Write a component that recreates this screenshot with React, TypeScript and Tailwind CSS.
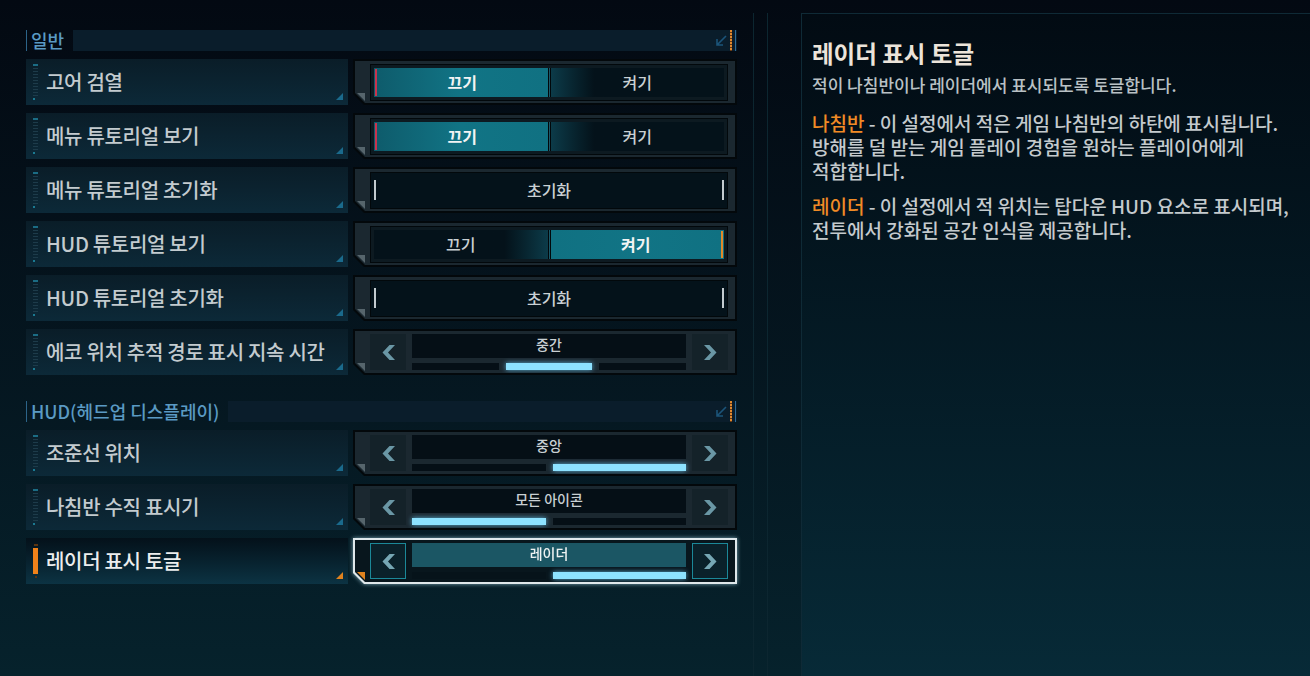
import React from "react";

type Ctrl =
  | { kind: "toggle"; on: boolean }
  | { kind: "button"; label: string }
  | { kind: "slider"; value: string; count: number; index: number };

interface Row {
  label: string;
  ctrl: Ctrl;
  selected?: boolean;
}

const GENERAL: Row[] = [
  { label: "고어 검열", ctrl: { kind: "toggle", on: false } },
  { label: "메뉴 튜토리얼 보기", ctrl: { kind: "toggle", on: false } },
  { label: "메뉴 튜토리얼 초기화", ctrl: { kind: "button", label: "초기화" } },
  { label: "HUD 튜토리얼 보기", ctrl: { kind: "toggle", on: true } },
  { label: "HUD 튜토리얼 초기화", ctrl: { kind: "button", label: "초기화" } },
  { label: "에코 위치 추적 경로 표시 지속 시간", ctrl: { kind: "slider", value: "중간", count: 3, index: 1 } },
];

const HUD: Row[] = [
  { label: "조준선 위치", ctrl: { kind: "slider", value: "중앙", count: 2, index: 1 } },
  { label: "나침반 수직 표시기", ctrl: { kind: "slider", value: "모든 아이콘", count: 2, index: 0 } },
  { label: "레이더 표시 토글", ctrl: { kind: "slider", value: "레이더", count: 2, index: 1 }, selected: true },
];

function SectionHeader({ title }: { title: string }) {
  return (
    <div className="flex h-[21px] items-stretch">
      <div className="w-px bg-[#2c6489]" />
      <div className="pl-[4px] pr-[9px] text-[18px] font-medium leading-[21px] text-[#5a9ac3]">{title}</div>
      <div className="flex flex-1 items-center justify-end bg-[#0a1d2b]">
        <svg width="12" height="12" viewBox="0 0 12 12" className="mr-[3px]">
          <path d="M11 1 L2.5 9.5 M2 4 V10 H8" stroke="#1b5479" strokeWidth="1.6" fill="none" />
        </svg>
        <div className="h-full w-[2px] bg-[repeating-linear-gradient(to_bottom,#e08a30_0_2px,#6a3a14_2px_3px)]" />
        <div className="ml-[3px] mr-[1px] h-full w-px bg-[#2a6a98]" />
      </div>
    </div>
  );
}

function Label({ text, selected }: { text: string; selected?: boolean }) {
  return (
    <div
      className={`relative flex w-[322px] shrink-0 items-center pl-[7px] ${
        selected ? "bg-linear-to-b from-[#04111a] to-[#0c3343]" : "bg-linear-to-b from-[#0a1d28] to-[#0c2938]"
      }`}
    >
      {selected ? (
        <div className="flex h-[34px] w-[5px] flex-col items-center">
          <div className="h-[2px] w-[4px] bg-[#5a3412]" />
          <div className="mt-[2px] w-[5px] flex-1 bg-[#f0821a]" />
          <div className="mt-[2px] h-[2px] w-[2px] bg-[#5a3412]" />
        </div>
      ) : (
        <div className="flex h-[36px] w-[5px] flex-col">
          <div className="h-[2px] w-[5px] bg-[#1b6c84]" />
          <div className="mt-[2px] flex-1 bg-[repeating-linear-gradient(to_bottom,#1d3b4a_0_1px,transparent_1px_3px)]" />
          <div className="mt-[1px] h-[2px] w-[2px] bg-[#1b7a92]" />
        </div>
      )}
      <span
        className={`ml-[8px] whitespace-nowrap text-[20px] font-medium leading-[26px] tracking-[-0.3px] ${
          selected ? "text-[#eceeee]" : "text-[#c3cbcf]"
        }`}
      >
        {text}
      </span>
      <div
        className={`absolute bottom-[5px] right-[5px] h-[7px] w-[7px] [clip-path:polygon(100%_0,100%_100%,0_100%)] ${
          selected ? "bg-[#e0821e]" : "bg-[#1a6a8c]"
        }`}
      />
    </div>
  );
}

function Chevron({ dir, selected }: { dir: "left" | "right"; selected?: boolean }) {
  const d = dir === "left" ? "M13 0 L6 7.5 L13 15 H7.5 L0.5 7.5 L7.5 0 Z" : "M0 0 L7 7.5 L0 15 H5.5 L12.5 7.5 L5.5 0 Z";
  return (
    <svg width="13" height="15" viewBox="0 0 13 15">
      <path d={d} fill={selected ? "#76a7b4" : "#6a97a5"} />
    </svg>
  );
}

function ArrowBox({ dir, selected }: { dir: "left" | "right"; selected?: boolean }) {
  return (
    <div
      className={`flex w-[36px] items-center justify-center ${
        selected ? "border border-[#1b8898] bg-[#0a212a]" : "bg-[#142229]"
      }`}
    >
      <Chevron dir={dir} selected={selected} />
    </div>
  );
}

function Toggle({ on }: { on: boolean }) {
  return (
    <div className="flex h-[37px] flex-1 border border-[#02080b] bg-[#0d1a21] p-[3px]">
      <div
        className={`flex flex-1 items-stretch ${
          !on ? "bg-linear-to-r from-[#0e5b6b] via-[#117485] to-[#107182]" : "bg-linear-to-r from-[#04121a] from-75% to-[#0c3b49]"
        }`}
      >
        {!on && <div className="my-[1px] ml-[1px] w-[2px] bg-[#c8354f]" />}
        <div
          className={`flex flex-1 items-center justify-center text-[16px] ${
            !on ? "font-bold text-[#f2f4f4]" : "font-medium text-[#c9d0d3]"
          }`}
        >
          끄기
        </div>
      </div>
      <div className="flex w-[3px] justify-center bg-[#01070a]">
        <div className="w-px bg-[#1a5868]" />
      </div>
      <div
        className={`flex flex-1 items-stretch ${
          on ? "bg-linear-to-r from-[#107182] via-[#117485] to-[#107182]" : "bg-linear-to-l from-[#04121a] from-75% to-[#0c3b49]"
        }`}
      >
        <div
          className={`flex flex-1 items-center justify-center text-[16px] ${
            on ? "font-bold text-[#f2f4f4]" : "font-medium text-[#c9d0d3]"
          }`}
        >
          켜기
        </div>
        {on && <div className="my-[1px] mr-[1px] w-[2px] bg-[#e08a2a]" />}
      </div>
    </div>
  );
}

function ResetButton({ label }: { label: string }) {
  return (
    <div className="flex h-[37px] flex-1 items-center border border-[#02080b] bg-[#04121a] px-[3px]">
      <div className="h-[20px] w-[2px] bg-[#c3cbcf]" />
      <div className="flex-1 text-center text-[16px] font-medium text-[#c9d0d3]">{label}</div>
      <div className="h-[20px] w-[2px] bg-[#c3cbcf]" />
    </div>
  );
}

function Slider({ value, count, index, selected }: { value: string; count: number; index: number; selected?: boolean }) {
  return (
    <div className="flex h-[36px] flex-1 gap-[6px]">
      <ArrowBox dir="left" selected={selected} />
      <div className="flex flex-1 flex-col">
        <div
          className={`h-[24px] text-center text-[14px] font-medium leading-[20px] ${
            selected ? "bg-[#1b5664] font-bold text-[#eef2f2]" : "bg-[#050f16] text-[#c9d0d3]"
          }`}
        >
          {value}
        </div>
        <div className="mt-[5px] flex h-[7px] gap-[7px]">
          {Array.from({ length: count }).map((_, i) => (
            <div
              key={i}
              className={`flex-1 ${
                i === index
                  ? "bg-[#8de2ff] shadow-[0_0_5px_rgba(110,210,255,0.8)]"
                  : selected
                  ? "bg-[#06131a]"
                  : "bg-[#050f16]"
              }`}
            />
          ))}
        </div>
      </div>
      <ArrowBox dir="right" selected={selected} />
    </div>
  );
}

function Frame({ selected, children }: { selected?: boolean; children: React.ReactNode }) {
  return (
    <div className={`flex flex-1 ${selected ? "[filter:drop-shadow(0_0_2px_rgba(170,220,235,0.7))]" : ""}`}>
      <div
        className={`flex flex-1 p-[2px] [clip-path:polygon(0_0,100%_0,100%_100%,11px_100%,0_calc(100%_-_11px))] ${
          selected ? "bg-[#dfe8eb]" : "bg-[#03080b]"
        }`}
      >
        <div
          className={`relative flex flex-1 items-center pl-[15px] pr-[7px] [clip-path:polygon(0_0,100%_0,100%_100%,10px_100%,0_calc(100%_-_10px))] ${
            selected ? "bg-[#08161d]" : "bg-[#1b2830]"
          }`}
        >
          {children}
          <div
            className={`absolute bottom-[2px] left-[2px] h-[8px] w-[8px] [clip-path:polygon(0_0,100%_0,100%_100%)] ${
              selected ? "bg-[#e0821e]" : "bg-[#56656c]"
            }`}
          />
        </div>
      </div>
    </div>
  );
}

function SettingRow({ row }: { row: Row }) {
  const c = row.ctrl;
  return (
    <div className="flex h-[46px] gap-[5px]">
      <Label text={row.label} selected={row.selected} />
      <Frame selected={row.selected}>
        {c.kind === "toggle" && <Toggle on={c.on} />}
        {c.kind === "button" && <ResetButton label={c.label} />}
        {c.kind === "slider" && <Slider value={c.value} count={c.count} index={c.index} selected={row.selected} />}
      </Frame>
    </div>
  );
}

export default function App() {
  return (
    <div className="flex h-[676px] w-[1310px] overflow-hidden bg-linear-to-b from-[#030912] to-[#06222c] font-['Noto_Sans_CJK_KR','Noto_Sans',sans-serif]">
      {/* 설정 목록 */}
      <div className="flex w-[737px] shrink-0 flex-col pl-[26px] pt-[30px]">
        <SectionHeader title="일반" />
        <div className="mt-[8px] flex flex-col gap-[8px]">
          {GENERAL.map((r) => (
            <SettingRow key={r.label} row={r} />
          ))}
        </div>
        <div className="mt-[26px]">
          <SectionHeader title="HUD(헤드업 디스플레이)" />
        </div>
        <div className="mt-[8px] flex flex-col gap-[8px]">
          {HUD.map((r) => (
            <SettingRow key={r.label} row={r} />
          ))}
        </div>
      </div>

      {/* 구분선 */}
      <div className="flex w-[64px] shrink-0 pt-[13px]">
        <div className="ml-[16px] w-px bg-[#0c2630]" />
        <div className="ml-[13px] w-px bg-[#0c2630]" />
      </div>

      {/* 설명 패널 */}
      <div className="mt-[13px] flex-1 border-l border-t border-[#0f2a36] bg-linear-to-b from-[#020b13] to-[#072a37] pl-[10px] pt-[24px]">
        <h1 className="text-[23.5px] font-bold leading-[30px] text-[#ece4da]">레이더 표시 토글</h1>
        <p className="mt-[6px] text-[17px] font-medium leading-[22px] text-[#b9c1c5]">적이 나침반이나 레이더에서 표시되도록 토글합니다.</p>
        <p className="mt-[15px] text-[19px] font-medium leading-[24px] text-[#c4cacd]">
          <span className="text-[#f08b26]">나침반</span> - 이 설정에서 적은 게임 나침반의 하탄에 표시됩니다.
          <br />
          방해를 덜 받는 게임 플레이 경험을 원하는 플레이어에게
          <br />
          적합합니다.
        </p>
        <p className="mt-[11px] text-[19px] font-medium leading-[24px] text-[#c4cacd]">
          <span className="text-[#f08b26]">레이더</span> - 이 설정에서 적 위치는 탑다운 HUD 요소로 표시되며,
          <br />
          전투에서 강화된 공간 인식을 제공합니다.
        </p>
      </div>
    </div>
  );
}
